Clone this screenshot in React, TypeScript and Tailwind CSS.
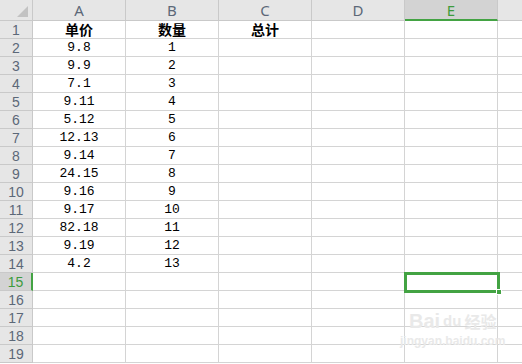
import React from "react";

const cols = ["A", "B", "C", "D", "E"];

const prices = ["9.8", "9.9", "7.1", "9.11", "5.12", "12.13", "9.14", "24.15", "9.16", "9.17", "82.18", "9.19", "4.2"];

const rows: string[][] = [
  ["单价", "数量", "总计", "", ""],
  ...prices.map((p, i) => [p, String(i + 1), "", "", ""]),
];
while (rows.length < 19) rows.push(["", "", "", "", ""]);

const SELECTED_ROW = 15;
const SELECTED_COL = 4;

export default function App() {
  return (
    <div className="relative w-[522px] h-[364px] overflow-hidden bg-white select-none">
      {/* Column header */}
      <div className="flex h-[21px]">
        <div className="relative w-[33px] shrink-0 bg-[#e6e6e6] border-r border-b border-[#c9c9c9]">
          <div className="absolute right-[4px] bottom-[3px] w-0 h-0 border-l-[11px] border-l-transparent border-b-[11px] border-b-[#c2c2c2]" />
        </div>
        {cols.map((c, i) => (
          <div
            key={c}
            className={
              i === SELECTED_COL
                ? "w-[93px] shrink-0 flex items-center justify-center bg-[#d3d3d3] border-r border-[#c9c9c9] border-b-2 border-b-[#43a343] text-[#3d9b3d] text-[15px] leading-[18px] font-['Noto_Sans',sans-serif]"
                : "w-[93px] shrink-0 flex items-center justify-center bg-[#e6e6e6] border-r border-b border-[#c9c9c9] text-[#5c6878] text-[15px] leading-[18px] font-['Noto_Sans',sans-serif]"
            }
          >
            {c}
          </div>
        ))}
        <div className="flex-1 bg-[#e6e6e6] border-b border-[#c9c9c9]" />
      </div>

      {/* Body */}
      {rows.map((r, ri) => {
        const n = ri + 1;
        const sel = n === SELECTED_ROW;
        return (
          <div key={n} className="flex h-[18px]">
            <div
              className={
                sel
                  ? "w-[33px] shrink-0 flex items-center justify-center bg-[#d3d3d3] border-b border-[#c9c9c9] border-r-2 border-r-[#43a343] text-[#3d9b3d] text-[14px] leading-[16px] font-['Liberation_Sans',sans-serif]"
                  : "w-[33px] shrink-0 flex items-center justify-center bg-[#e6e6e6] border-r border-b border-[#c9c9c9] text-[#5c6878] text-[14px] leading-[16px] font-['Liberation_Sans',sans-serif]"
              }
            >
              {n}
            </div>
            {r.map((v, ci) => (
              <div
                key={ci}
                className={
                  n === 1
                    ? "w-[93px] shrink-0 flex items-end justify-center pb-[1px] border-r border-b border-[#d4d4d4] text-black text-[14px] leading-[16px] font-bold font-['Noto_Sans_CJK_SC',sans-serif]"
                    : "w-[93px] shrink-0 flex items-end justify-center pb-[1px] border-r border-b border-[#d4d4d4] text-black text-[13px] leading-[14px] font-['Liberation_Mono','Noto_Sans_CJK_SC',monospace]"
                }
              >
                {v}
              </div>
            ))}
            <div className="flex-1 border-b border-[#d4d4d4]" />
          </div>
        );
      })}

      {/* Active cell E15 */}
      <div className="absolute left-[404px] top-[272px] w-[96px] h-[21px] border-[3px] border-[#43a343]" />
      <div className="absolute left-[496px] top-[289px] w-[6px] h-[6px] bg-[#43a343] border border-white" />

      {/* Watermark */}
      <div className="absolute left-[400px] top-[310px] flex flex-col items-center pointer-events-none text-[#e9e9e9]">
        <div className="flex items-end gap-[3px] leading-[22px]">
          <span className="text-[20px] font-bold font-['Liberation_Sans',sans-serif]">Bai</span>
          <span className="text-[15px] font-bold font-['Liberation_Sans',sans-serif]">du</span>
          <span className="text-[16px] font-bold font-['Noto_Sans_CJK_SC',sans-serif]">经验</span>
        </div>
        <div className="text-[12px] leading-[14px] mt-[2px] font-bold font-['Liberation_Sans',sans-serif]">jingyan.baidu.com</div>
      </div>
    </div>
  );
}
